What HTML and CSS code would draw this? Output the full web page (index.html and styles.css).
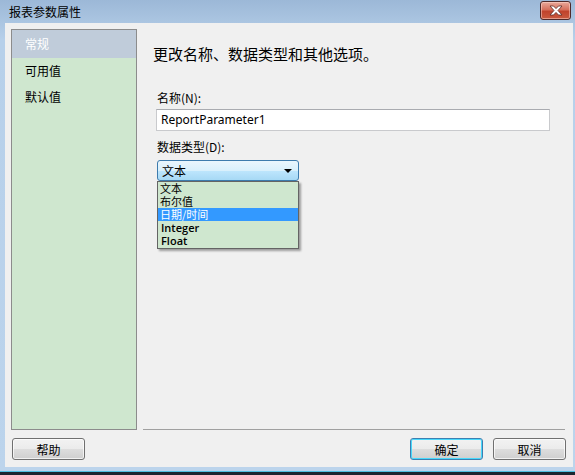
FILE: index.html
```html
<!DOCTYPE html>
<html>
  <head>
    <meta name="viewport" content="width=device-width, initial-scale=1" />
    <title>报表参数属性</title>
    <link rel="stylesheet" href="styles.css">
  </head>

  <body>
    <div class="window">
      <div class="titlebar">
        <span class="title">报表参数属性</span>
        <button class="close" title="关闭">
          <svg width="16" height="11" viewBox="0 0 16 11">
            <path d="M2 1 L5.5 1 L8 3.6 L10.5 1 L14 1 L10 5.5 L14 10 L10.5 10 L8 7.4 L5.5 10 L2 10 L6 5.5 Z"
                  fill="#ffffff" stroke="#5a2a24" stroke-width="0.8" stroke-linejoin="round"/>
          </svg>
        </button>
      </div>

      <div class="client">
        <div class="body-row">
          <ul class="sidebar">
            <li class="active">常规</li>
            <li>可用值</li>
            <li>默认值</li>
          </ul>

          <div class="main">
            <h1>更改名称、数据类型和其他选项。</h1>

            <div class="fields">
              <label>名称(N):</label>
              <input type="text" class="textbox" value="ReportParameter1" />

              <label class="second">数据类型(D):</label>
              <div class="combo-wrap">
                <div class="combo">
                  <span>文本</span>
                  <span class="arrow"></span>
                </div>
                <!-- open drop-down list -->
                <ul class="dropdown">
                  <li>文本</li>
                  <li>布尔值</li>
                  <li class="hot">日期/时间</li>
                  <li class="latin">Integer</li>
                  <li class="latin">Float</li>
                </ul>
              </div>
            </div>
          </div>
        </div>

        <div class="footer">
          <button class="btn">帮助</button>
          <div class="right-buttons">
            <button class="btn default">确定</button>
            <button class="btn">取消</button>
          </div>
        </div>
      </div>
    </div>
  </body>
</html>
```

FILE: styles.css
```css
body {
  margin: 0;
  font-family: "Noto Sans CJK SC", "Noto Sans", sans-serif;
  font-size: 12px;
  color: #000;
}

.window {
  width: 575px;
  height: 475px;
  box-sizing: border-box;
  background: linear-gradient(#9cb8d7, #b7d0ea 40px, #bcd4ec);
  border-bottom: 3px solid #1c2630;
  display: flex;
  flex-direction: column;
  position: relative;
}

.window::after {
  content: "";
  position: absolute;
  left: 0;
  right: 0;
  bottom: 0;
  height: 1px;
  background: #4ec0e0;
}

.titlebar {
  height: 23px;
  display: flex;
  align-items: center;
  justify-content: space-between;
  padding-left: 9px;
  padding-right: 4px;
}

.title {
  font-size: 12px;
  color: #000;
  margin-top: -1px;
}

.close {
  width: 31px;
  height: 19px;
  margin-top: -3px;
  padding: 0;
  border: 1px solid #4f2a2a;
  border-radius: 3px;
  background: linear-gradient(#e9a99b, #d6705c 45%, #c0432c 55%, #c95a3f);
  display: flex;
  align-items: center;
  justify-content: center;
  box-shadow: inset 0 0 0 1px rgba(255, 220, 210, 0.5);
}

.client {
  height: 444px;
  margin: 0 2px 0 5px;
  background: #f0f0f0;
  box-sizing: border-box;
  padding: 6px 8px 0 6px;
  display: flex;
  flex-direction: column;
}

.body-row {
  height: 401px;
  display: flex;
}

.sidebar {
  width: 126px;
  margin: 0;
  padding: 0;
  list-style: none;
  box-sizing: border-box;
  border: 1px solid #8c8c8c;
  background: #cfe7cf;
}

.sidebar li {
  height: 26px;
  line-height: 26px;
  padding-left: 13px;
  font-size: 12px;
}

.sidebar li.active {
  height: 28px;
  line-height: 27px;
  background: #c0ccda;
  color: #ffffff;
}

.main {
  flex: 1;
  margin-left: 6px;
  border-bottom: 1px solid #a0a0a0;
  position: relative;
}

.main h1 {
  margin: 15px 0 0 10px;
  font-size: 15px;
  font-weight: normal;
  line-height: 20px;
}

.fields {
  padding: 0 15px 0 13px;
  margin-top: 26px;
}

.fields label {
  display: block;
  padding-left: 1px;
  font-size: 12px;
  line-height: 16px;
  height: 16px;
}

.fields label.second {
  margin-top: 8px;
}

.textbox {
  display: block;
  width: 100%;
  height: 22px;
  box-sizing: border-box;
  margin: 3px 0 0;
  padding: 0 4px 1px;
  border: 1px solid #c9cacd;
  border-top-color: #a9abb0;
  background: #ffffff;
  font-family: "Noto Sans", "Open Sans", sans-serif;
  font-size: 12px;
  color: #000;
  outline: none;
}

.combo-wrap {
  position: relative;
  width: 142px;
  margin: 5px 0 0 1px;
}

.combo {
  height: 21px;
  box-sizing: border-box;
  border: 1px solid #3d7bad;
  border-radius: 3px;
  background: linear-gradient(#eaf6fd, #d9f0fc 50%, #bee6fd 51%, #a7d9f5);
  display: flex;
  align-items: center;
  justify-content: space-between;
  padding: 0 6px 0 4px;
  font-size: 12px;
}

.arrow {
  width: 0;
  height: 0;
  border-left: 4px solid transparent;
  border-right: 4px solid transparent;
  border-top: 4px solid #000;
}

.dropdown {
  position: absolute;
  top: 21px;
  left: 0;
  width: 142px;
  box-sizing: border-box;
  margin: 0;
  padding: 0 0 1px;
  list-style: none;
  border: 1px solid #646464;
  background: #cfe7cf;
  box-shadow: 2px 2px 2px rgba(0, 0, 0, 0.35);
}

.dropdown li {
  height: 13px;
  line-height: 13px;
  padding-left: 2px;
  font-size: 11px;
}

.dropdown li.hot {
  background: #3399ff;
  color: #ffffff;
}

.dropdown li.latin {
  font-family: "Open Sans", "Noto Sans", sans-serif;
  font-weight: 600;
  font-size: 11px;
  padding-left: 3px;
}

.footer {
  display: flex;
  justify-content: space-between;
  margin-top: 8px;
  padding-left: 1px;
}

.right-buttons {
  display: flex;
  gap: 10px;
  margin-right: -1px;
}

.btn {
  width: 73px;
  height: 22px;
  padding: 0;
  border: 1px solid #707070;
  border-radius: 3px;
  background: linear-gradient(#f2f2f2, #ebebeb 50%, #dddddd 51%, #cfcfcf);
  font-family: "Noto Sans CJK SC", sans-serif;
  font-size: 12px;
  color: #000;
  box-shadow: inset 0 0 0 1px rgba(255, 255, 255, 0.7);
}

.btn.default {
  border-color: #3c7fb1;
  box-shadow: inset 0 0 0 1px #48d8fb;
}
```
